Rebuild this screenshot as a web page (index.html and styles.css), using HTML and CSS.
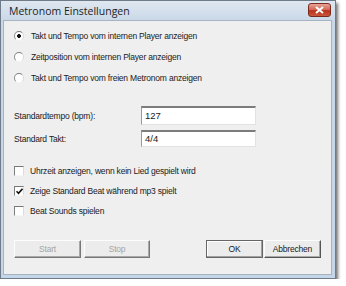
FILE: index.html
```html
<!DOCTYPE html>
<html lang="de">
<head>
<meta charset="UTF-8">
<title>Metronom Einstellungen</title>
<link rel="stylesheet" href="styles.css">
</head>
<body>

<div class="window">
  <div class="titlebar">
    <span class="title">Metronom Einstellungen</span>
    <button class="close-button" title="Schließen">
      <svg width="9" height="8" viewBox="0 0 9 8"><path d="M1 1 L8 7 M8 1 L1 7" stroke="#fff" stroke-width="2"/></svg>
    </button>
  </div>

  <div class="client">
    <div class="radio-group">
      <div class="option"><span class="radio checked"></span>Takt und Tempo vom internen Player anzeigen</div>
      <div class="option"><span class="radio"></span>Zeitposition vom internen Player anzeigen</div>
      <div class="option"><span class="radio"></span>Takt und Tempo vom freien Metronom anzeigen</div>
    </div>

    <div class="fields">
      <div class="field field-tempo">
        <label>Standardtempo (bpm):</label>
        <div class="textbox">127</div>
      </div>
      <div class="field field-takt">
        <label>Standard Takt:</label>
        <div class="textbox">4/4</div>
      </div>
    </div>

    <div class="check-group">
      <div class="option"><span class="checkbox"></span>Uhrzeit anzeigen, wenn kein Lied gespielt wird</div>
      <div class="option"><span class="checkbox"><svg width="7" height="7" viewBox="0 0 7 7"><path d="M0.5 3.2 L2.5 5.3 L6.5 0.8" stroke="#111" stroke-width="1.6" fill="none"/></svg></span>Zeige Standard Beat während mp3 spielt</div>
      <div class="option"><span class="checkbox"></span>Beat Sounds spielen</div>
    </div>

    <div class="footer">
      <button class="btn btn-start" disabled>Start</button>
      <button class="btn btn-stop" disabled>Stop</button>
      <span class="spacer"></span>
      <button class="btn btn-ok">OK</button>
      <button class="btn btn-cancel">Abbrechen</button>
    </div>
  </div>
</div>

</body>
</html>
```

FILE: styles.css
```css
body {
  margin: 0;
  padding: 0;
  background-color: #fff;
  font-family: "Liberation Sans", Arial, sans-serif;
  font-size: 8.5px;
  letter-spacing: -0.2px;
  color: #1a1a1a;
}
.window {
  width: 336px;
  height: 279px;
  box-sizing: border-box;
  border: 1px solid #6f7b88;
  background: linear-gradient(#dfe7f0, #c9d8e8 20px, #c4d6e8);
  padding: 0 3px 3px 2px;
  display: flex;
  flex-direction: column;
  box-shadow: 2px 3px 3px rgba(0, 0, 0, 0.55);
}
.titlebar {
  height: 19px;
  display: flex;
  align-items: center;
  padding-left: 6px;
  padding-right: 1px;
}
.title {
  flex: 1;
  font-family: "Open Sans", sans-serif;
  font-size: 10.5px;
  letter-spacing: 0;
  color: #1d1d1d;
}
.close-button {
  width: 23px;
  height: 14px;
  margin-top: -2px;
  padding: 0;
  border: 1px solid #7a2a20;
  border-radius: 3px;
  background: linear-gradient(#e8a497, #d0644f 50%, #b8321b 55%, #c9573c);
  display: flex;
  align-items: center;
  justify-content: center;
}
.client {
  flex: 1;
  background-color: #efefef;
  border: 1px solid #a7b3c0;
  padding: 4px 0 0 10px;
  display: flex;
  flex-direction: column;
}
.option {
  height: 20px;
  display: flex;
  align-items: center;
}
.radio-group .option {
  height: 21px;
}
.radio {
  width: 8px;
  height: 8px;
  margin-right: 7px;
  border-radius: 50%;
  border: 1px solid;
  border-color: #7d7d7d #d8d8d8 #f4f4f4 #8a8a8a;
  background-color: #fff;
}
.radio.checked {
  background: radial-gradient(circle, #111 1.6px, #fff 2.2px);
}
.fields {
  margin-top: 18px;
}
.field {
  display: flex;
  align-items: center;
}
.field label {
  width: 127px;
}
.field-takt {
  margin-top: 5px;
}
.textbox {
  width: 115px;
  height: 19px;
  box-sizing: border-box;
  background-color: #fff;
  border: 1px solid #e2e2e2;
  border-top: 2px solid #7c7c7c;
  border-left: 1px solid #9a9a9a;
  padding: 2px 0 0 3px;
  font-size: 9.5px;
  letter-spacing: 0;
}
.field-takt .textbox {
  height: 17px;
  padding-top: 1px;
}
.check-group {
  margin-top: 14px;
}
.checkbox {
  width: 8px;
  height: 8px;
  margin-right: 6px;
  border: 1px solid;
  border-color: #777 #dcdcdc #f6f6f6 #7e7e7e;
  background-color: #fff;
  display: flex;
  align-items: center;
  justify-content: center;
}
.footer {
  display: flex;
  margin-top: auto;
  margin-bottom: 16px;
  padding-right: 10px;
}
.spacer {
  flex: 1;
}
.btn {
  height: 18px;
  padding: 0;
  font-family: "Liberation Sans", Arial, sans-serif;
  font-size: 8.5px;
  letter-spacing: -0.2px;
  color: #1a1a1a;
  background-color: #ececec;
  border: 1px solid;
  border-color: #fdfdfd #555 #555 #fdfdfd;
  box-shadow: inset -1px -1px 0 #a8a8a8;
}
.btn:disabled {
  color: #a5a5a5;
  border-color: #fdfdfd #777 #777 #fdfdfd;
}
.btn-start {
  width: 67px;
}
.btn-stop {
  width: 66px;
  margin-left: 3px;
}
.btn-ok {
  width: 57px;
  border-color: #666;
  box-shadow: inset -1px -1px 0 #a0a0a0, inset 1px 1px 0 #fff;
}
.btn-cancel {
  width: 57px;
  margin-left: 1px;
}
```
